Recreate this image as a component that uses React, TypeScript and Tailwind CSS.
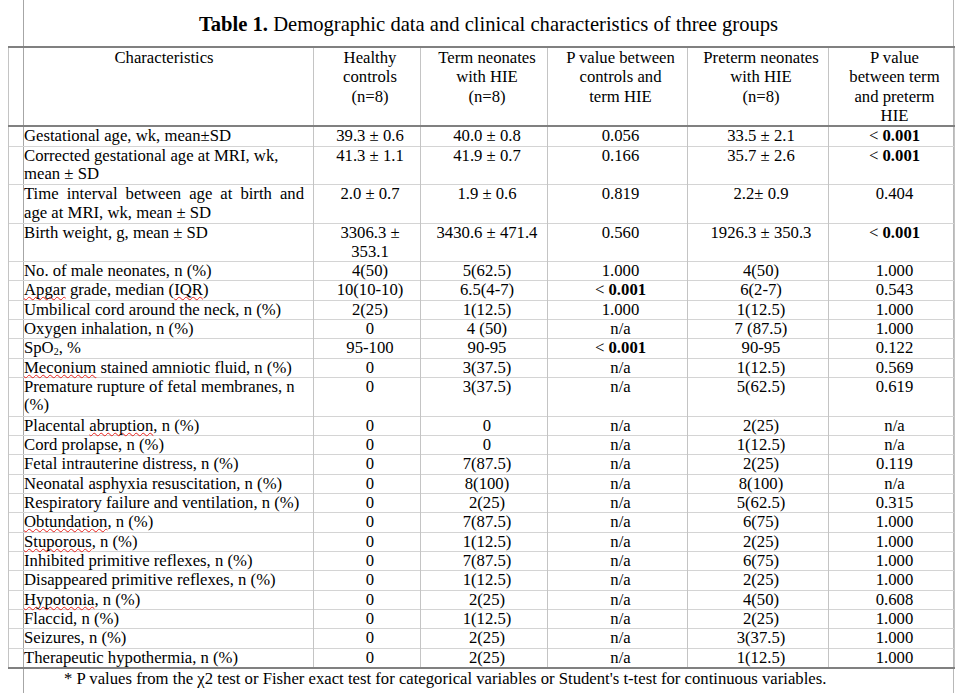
import type { ReactNode } from "react";

type Row = {
  label: ReactNode;
  cells: ReactNode[];
  justify?: boolean;
  tall?: boolean;
};

const Spell = ({ children }: { children: ReactNode }) => (
  <span className="underline decoration-wavy decoration-[#e8201a] decoration-1 underline-offset-[1px] [text-decoration-skip-ink:none]">
    {children}
  </span>
);

const Sig = () => (
  <>
    &lt; <b>0.001</b>
  </>
);

const rows: Row[] = [
  { label: "Gestational age, wk, mean±SD", cells: ["39.3 ± 0.6", "40.0 ± 0.8", "0.056", "33.5 ± 2.1", <Sig />] },
  {
    label: "Corrected gestational age at MRI, wk, mean ± SD",
    cells: ["41.3 ± 1.1", "41.9 ± 0.7", "0.166", "35.7 ± 2.6", <Sig />],
    tall: true,
  },
  {
    label: "Time interval between age at birth and age at MRI, wk, mean ± SD",
    cells: ["2.0 ± 0.7", "1.9 ± 0.6", "0.819", "2.2± 0.9", "0.404"],
    justify: true,
    tall: true,
  },
  {
    label: "Birth weight, g, mean ± SD",
    cells: ["3306.3 ± 353.1", "3430.6 ± 471.4", "0.560", "1926.3 ± 350.3", <Sig />],
    tall: true,
  },
  { label: "No. of male neonates, n (%)", cells: ["4(50)", "5(62.5)", "1.000", "4(50)", "1.000"] },
  {
    label: (
      <>
        <Spell>Apgar</Spell> grade, median (<Spell>IQR</Spell>)
      </>
    ),
    cells: ["10(10-10)", "6.5(4-7)", <Sig />, "6(2-7)", "0.543"],
  },
  { label: "Umbilical cord around the neck, n (%)", cells: ["2(25)", "1(12.5)", "1.000", "1(12.5)", "1.000"] },
  { label: "Oxygen inhalation, n (%)", cells: ["0", "4 (50)", "n/a", "7 (87.5)", "1.000"] },
  {
    label: (
      <>
        SpO<sub className="text-[10px] align-baseline relative top-[2px]">2</sub>, %
      </>
    ),
    cells: ["95-100", "90-95", <Sig />, "90-95", "0.122"],
  },
  {
    label: (
      <>
        <Spell>Meconium</Spell> stained amniotic fluid, n (%)
      </>
    ),
    cells: ["0", "3(37.5)", "n/a", "1(12.5)", "0.569"],
  },
  {
    label: "Premature rupture of fetal membranes, n (%)",
    cells: ["0", "3(37.5)", "n/a", "5(62.5)", "0.619"],
    tall: true,
  },
  {
    label: (
      <>
        Placental <Spell>abruption</Spell>, n (%)
      </>
    ),
    cells: ["0", "0", "n/a", "2(25)", "n/a"],
  },
  { label: "Cord prolapse, n (%)", cells: ["0", "0", "n/a", "1(12.5)", "n/a"] },
  { label: "Fetal intrauterine distress, n (%)", cells: ["0", "7(87.5)", "n/a", "2(25)", "0.119"] },
  { label: "Neonatal asphyxia resuscitation, n (%)", cells: ["0", "8(100)", "n/a", "8(100)", "n/a"] },
  { label: "Respiratory failure and ventilation, n (%)", cells: ["0", "2(25)", "n/a", "5(62.5)", "0.315"] },
  {
    label: (
      <>
        <Spell>Obtundation</Spell>, n (%)
      </>
    ),
    cells: ["0", "7(87.5)", "n/a", "6(75)", "1.000"],
  },
  {
    label: (
      <>
        <Spell>Stuporous</Spell>, n (%)
      </>
    ),
    cells: ["0", "1(12.5)", "n/a", "2(25)", "1.000"],
  },
  { label: "Inhibited primitive reflexes, n (%)", cells: ["0", "7(87.5)", "n/a", "6(75)", "1.000"] },
  { label: "Disappeared primitive reflexes, n (%)", cells: ["0", "1(12.5)", "n/a", "2(25)", "1.000"] },
  {
    label: (
      <>
        <Spell>Hypotonia</Spell>, n (%)
      </>
    ),
    cells: ["0", "2(25)", "n/a", "4(50)", "0.608"],
  },
  { label: "Flaccid, n (%)", cells: ["0", "1(12.5)", "n/a", "2(25)", "1.000"] },
  { label: "Seizures, n (%)", cells: ["0", "2(25)", "n/a", "3(37.5)", "1.000"] },
  { label: "Therapeutic hypothermia, n (%)", cells: ["0", "2(25)", "n/a", "1(12.5)", "1.000"] },
];

const headers: ReactNode[] = [
  <>Healthy<br />controls<br />(n=8)</>,
  <>Term neonates<br />with HIE<br />(n=8)</>,
  <>P value between<br />controls and<br />term HIE</>,
  <>Preterm neonates<br />with HIE<br />(n=8)</>,
  <>P value<br />between term<br />and preterm<br />HIE</>,
];

export default function App() {
  return (
    <div className="min-h-screen bg-white text-black font-['Liberation_Serif',serif]">
      <div className="ml-[23px] w-[931px] h-[693px] border-x border-l-[#a6a6a6] border-r-[#b8b8b8]">
        <div className="h-[46px] pt-[12px] text-center text-[20.6px] leading-[24px]">
          <b>Table 1.</b> Demographic data and clinical characteristics of three groups
        </div>

        <table className="-ml-[16px] w-[946px] table-fixed border-collapse border-y-2 border-y-[#808080] text-[16.7px]">
          <colgroup>
            <col className="w-[305px]" />
            <col className="w-[107px]" />
            <col className="w-[127px]" />
            <col className="w-[140px]" />
            <col className="w-[141px]" />
            <col className="w-[126px]" />
          </colgroup>
          <thead>
            <tr className="border-b-2 border-b-[#808080]">
              <th className="border-x border-[#c4c4c4] pl-[15px] pr-[9px] align-top font-normal leading-[19.33px] text-center">
                Characteristics
              </th>
              {headers.map((h, i) => (
                <th
                  key={i}
                  className="border-x border-[#c4c4c4] pl-[7px] pr-[1px] align-top font-normal leading-[19.33px] text-center"
                >
                  {h}
                </th>
              ))}
            </tr>
          </thead>
          <tbody>
            {rows.map((r, i) => (
              <tr key={i} className="border-t border-t-[#d4d4d4]">
                <td
                  className={`border-x border-[#c4c4c4] pl-[15px] pr-[9px] align-top leading-[18.33px] ${
                    r.justify ? "text-justify" : "text-left"
                  } ${r.tall ? "pb-[1.2px]" : ""}`}
                >
                  {r.label}
                </td>
                {r.cells.map((c, j) => (
                  <td
                    key={j}
                    className="border-x border-[#c4c4c4] pl-[7px] pr-[1px] align-top text-center leading-[18.33px]"
                  >
                    {c}
                  </td>
                ))}
              </tr>
            ))}
          </tbody>
        </table>

        <p className="pl-[40px] text-[16.7px] leading-[19.33px]">
          * P values from the χ2 test or Fisher exact test for categorical variables or Student's t-test for
          continuous variables.
        </p>
      </div>
    </div>
  );
}
